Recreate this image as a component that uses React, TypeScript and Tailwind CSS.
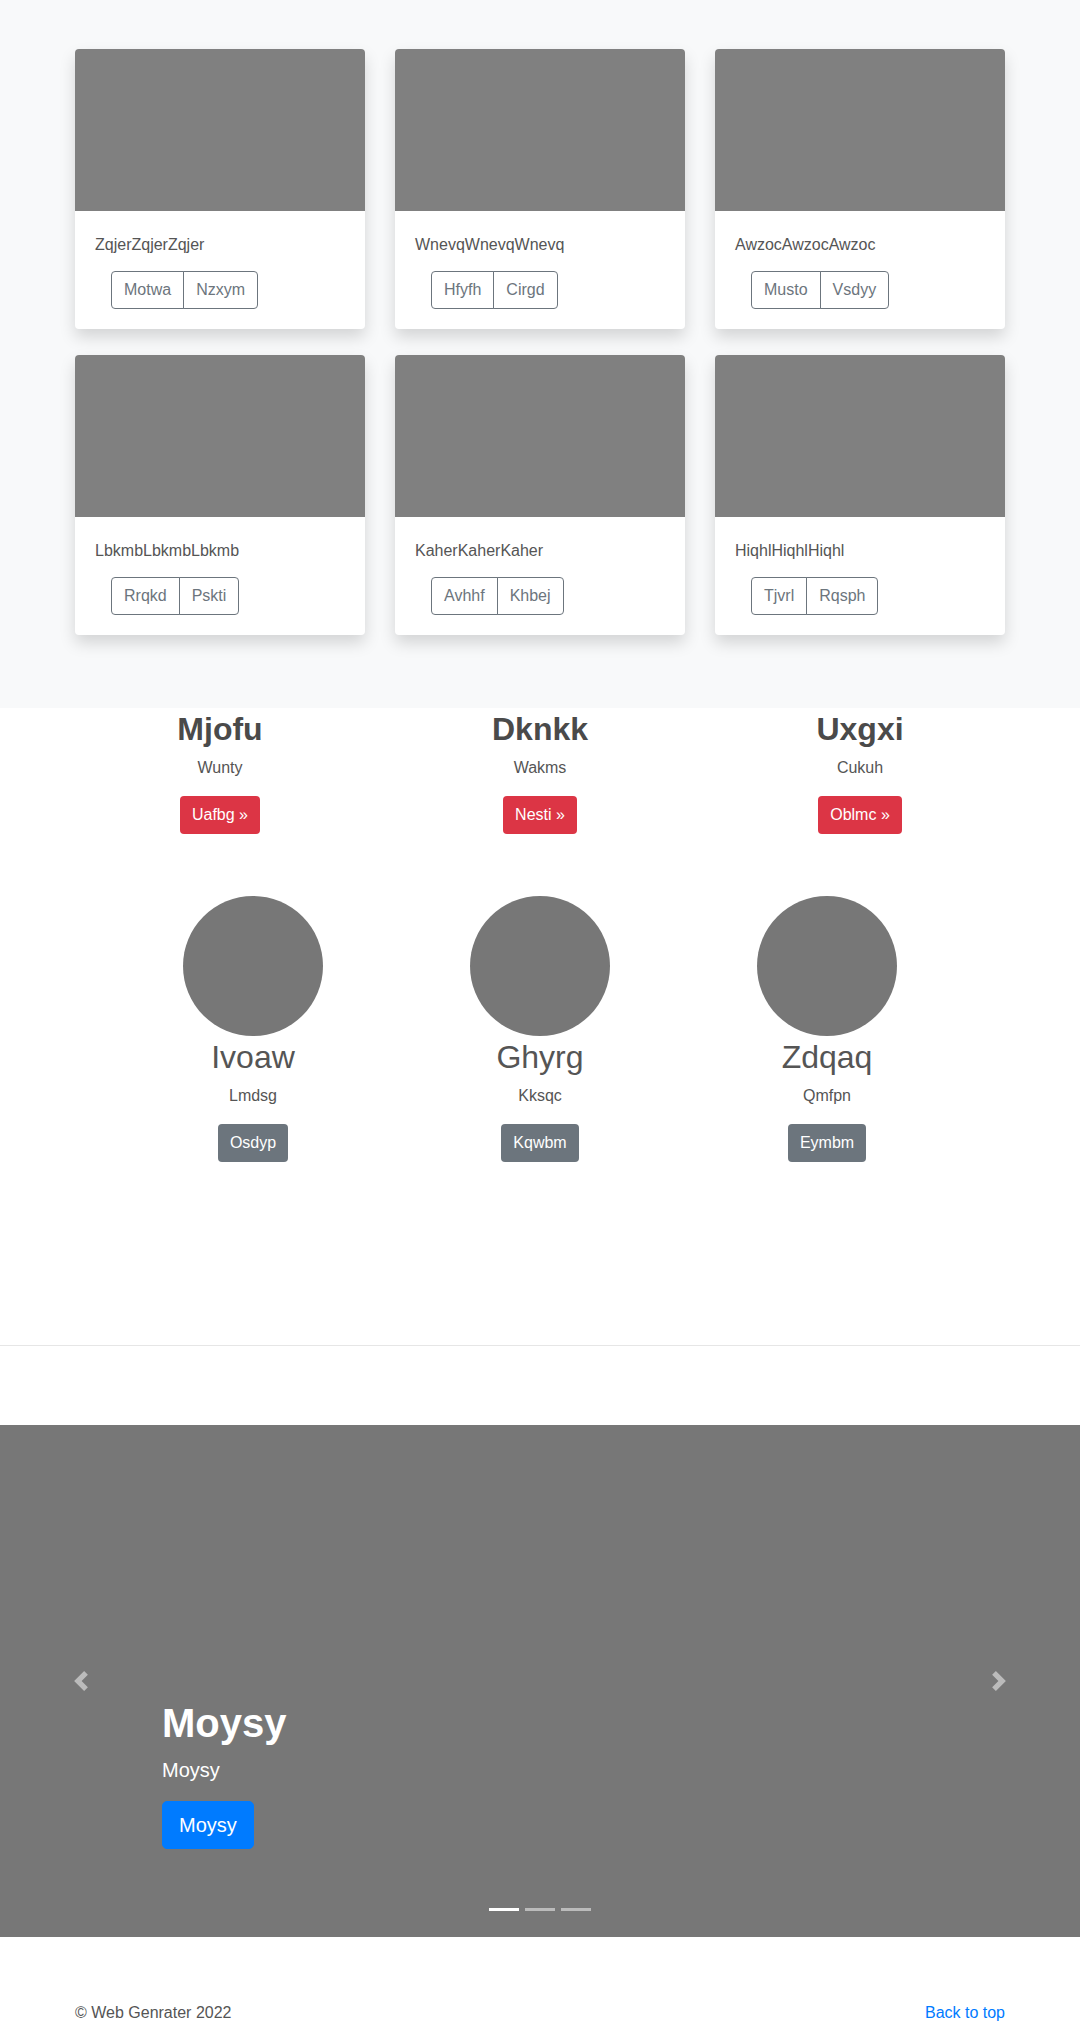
const cards = [
  { title: 'ZqjerZqjerZqjer', a: 'Motwa', b: 'Nzxym' },
  { title: 'WnevqWnevqWnevq', a: 'Hfyfh', b: 'Cirgd' },
  { title: 'AwzocAwzocAwzoc', a: 'Musto', b: 'Vsdyy' },
  { title: 'LbkmbLbkmbLbkmb', a: 'Rrqkd', b: 'Pskti' },
  { title: 'KaherKaherKaher', a: 'Avhhf', b: 'Khbej' },
  { title: 'HiqhlHiqhlHiqhl', a: 'Tjvrl', b: 'Rqsph' },
];

const features = [
  { title: 'Mjofu', text: 'Wunty', cta: 'Uafbg »' },
  { title: 'Dknkk', text: 'Wakms', cta: 'Nesti »' },
  { title: 'Uxgxi', text: 'Cukuh', cta: 'Oblmc »' },
];

const people = [
  { name: 'Ivoaw', text: 'Lmdsg', cta: 'Osdyp' },
  { name: 'Ghyrg', text: 'Kksqc', cta: 'Kqwbm' },
  { name: 'Zdqaq', text: 'Qmfpn', cta: 'Eymbm' },
];

export default function App() {
  return (
    <div className="bg-white font-['Liberation_Sans',Arial,sans-serif] text-base leading-6 text-[#555]">
      {/* Album cards */}
      <section className="bg-[#f8f9fa] pt-[49px] pb-[73px]">
        <div className="mx-auto w-[960px] px-[15px]">
          <div className="grid grid-cols-3 gap-x-[30px] gap-y-[26px]">
            {cards.map((card) => (
              <div
                key={card.title}
                className="overflow-hidden rounded bg-white shadow-[0_0.5rem_1rem_rgba(0,0,0,0.15)]"
              >
                <div className="h-[162px] bg-[#808080]"></div>
                <div className="px-5 pt-[22px] pb-5">
                  <p className="mb-[14px]">{card.title}</p>
                  <div className="ml-4 flex">
                    <button className="rounded-l border border-[#6c757d] px-3 py-[6px] leading-6 text-[#6c757d]">
                      {card.a}
                    </button>
                    <button className="-ml-px rounded-r border border-[#6c757d] px-3 py-[6px] leading-6 text-[#6c757d]">
                      {card.b}
                    </button>
                  </div>
                </div>
              </div>
            ))}
          </div>
        </div>
      </section>

      {/* Marketing rows */}
      <section className="pt-[2px]">
        <div className="mx-auto grid w-[960px] grid-cols-3">
          {features.map((f) => (
            <div key={f.title} className="flex flex-col items-center">
              <h2 className="mb-2 text-[32px] leading-[38px] font-semibold text-[#4a4a4a]">{f.title}</h2>
              <p className="mb-4">{f.text}</p>
              <a href="#" className="rounded bg-[#dc3545] px-3 py-[7px] leading-6 text-white">
                {f.cta}
              </a>
            </div>
          ))}
        </div>

        <div className="mx-auto mt-[62px] grid w-[861px] grid-cols-3">
          {people.map((p) => (
            <div key={p.name} className="flex flex-col items-center">
              <div className="h-[140px] w-[140px] rounded-full bg-[#777]"></div>
              <h2 className="mt-[2px] mb-2 text-[32px] leading-[38px] font-normal">{p.name}</h2>
              <p className="mb-4">{p.text}</p>
              <a href="#" className="rounded bg-[#6c757d] px-3 py-[7px] leading-6 text-white">
                {p.cta}
              </a>
            </div>
          ))}
        </div>
      </section>

      <hr className="mt-[183px] border-0 border-t border-[#e6e6e6]" />

      {/* Carousel */}
      <div className="relative mt-[79px] mb-16 h-[512px] bg-[#777]">
        <a href="#" className="absolute inset-y-0 left-0 flex w-[15%] items-center justify-center opacity-50">
          <svg width="20" height="20" viewBox="0 0 8 8" fill="#fff">
            <path d="M5.25 0l-4 4 4 4 1.5-1.5L4.25 4l2.5-2.5L5.25 0z" />
          </svg>
        </a>
        <a href="#" className="absolute inset-y-0 right-0 flex w-[15%] items-center justify-center opacity-50">
          <svg width="20" height="20" viewBox="0 0 8 8" fill="#fff">
            <path d="M2.75 0l-1.5 1.5L3.75 4l-2.5 2.5L2.75 8l4-4-4-4z" />
          </svg>
        </a>

        <div className="absolute right-[15%] bottom-12 left-[15%] py-5 text-left text-white">
          <h1 className="mb-2 text-[40px] leading-[48px] font-semibold">Moysy</h1>
          <p className="mb-4 text-[20px] leading-[30px]">Moysy</p>
          <div className="mb-5 flex">
            <a href="#" className="rounded-[5px] border border-[#007bff] bg-[#007bff] px-4 py-2 text-[20px] leading-[30px] text-white">
              Moysy
            </a>
          </div>
        </div>

        <ol className="absolute right-[15%] bottom-0 left-[15%] mb-4 flex justify-center">
          <li className="mx-[3px] my-[10px] h-[3px] w-[30px] bg-white"></li>
          <li className="mx-[3px] my-[10px] h-[3px] w-[30px] bg-white opacity-50"></li>
          <li className="mx-[3px] my-[10px] h-[3px] w-[30px] bg-white opacity-50"></li>
        </ol>
      </div>

      {/* Footer */}
      <footer className="mx-auto flex w-[960px] justify-between px-[15px]">
        <p className="mb-4">© Web Genrater 2022</p>
        <p className="mb-4">
          <a href="#" className="text-[#007bff]">Back to top</a>
        </p>
      </footer>
    </div>
  );
}
